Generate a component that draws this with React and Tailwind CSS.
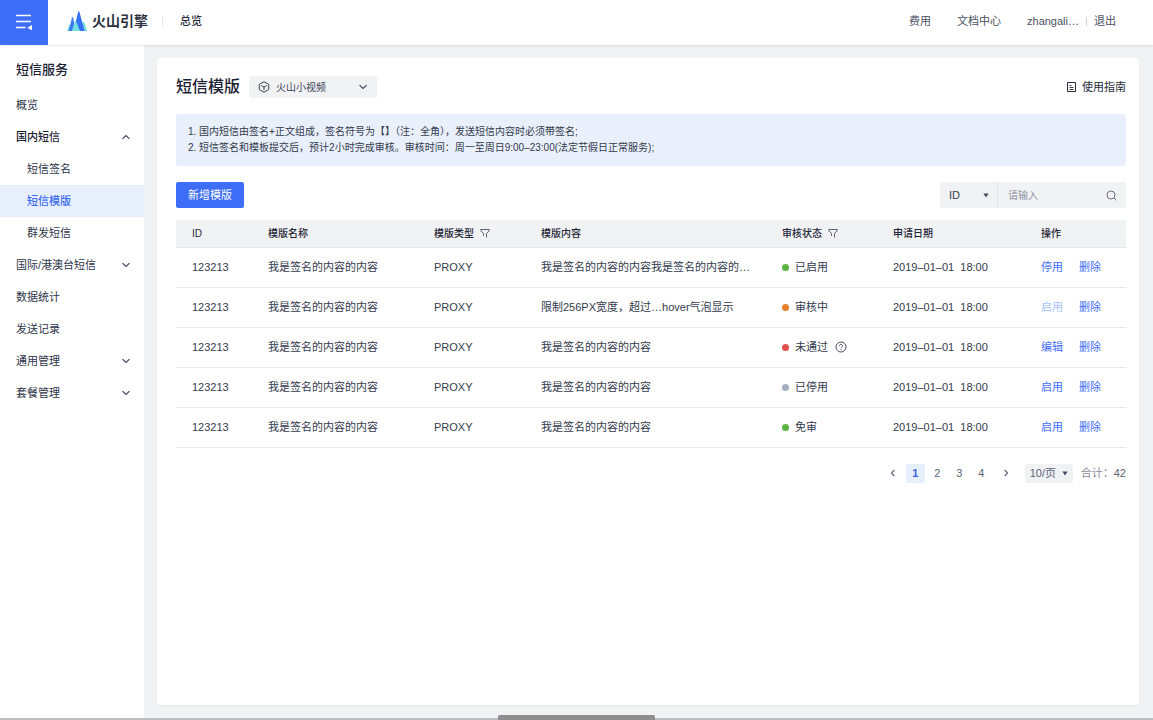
import React from "react";

const Chevron = ({ d, className = "" }) => (
  <svg viewBox="0 0 10 10" className={`h-[10px] w-[10px] shrink-0 ${className}`} fill="none" stroke="currentColor" strokeWidth="1.1" aria-hidden="true">
    <path d={d} />
  </svg>
);
const UP = "M1.5 6.8 5 3.5l3.5 3.3";
const DOWN = "M1.5 3.2 5 6.5l3.5-3.3";
const LEFT = "M6.3 2 3.5 5l2.8 3";
const RIGHT = "M3.7 2 6.5 5 3.7 8";

const Caret = ({ className = "" }) => (
  <svg viewBox="0 0 6 5" className={`pointer-events-none h-[5px] w-[6px] shrink-0 text-[#41485c] ${className}`} aria-hidden="true">
    <path d="M.4.4h5.2L3 4.6z" fill="currentColor" />
  </svg>
);

const Funnel = () => (
  <svg viewBox="0 0 10 10" className="h-[10px] w-[10px]" fill="none" stroke="#4a5169" strokeWidth=".9" strokeLinejoin="round" aria-hidden="true">
    <path d="M3.5 7.8V5.3L.7 2.8V1.5h8.6v1.3L6.5 5.3v4.2" />
  </svg>
);

const Logo = () => (
  <svg viewBox="0 0 20 20" className="h-5 w-5" aria-hidden="true">
    <path d="M0 20 2.6 13.5h2L6 20z" fill="#6fdcdc" />
    <path d="M1.8 20 5 6.5q.5-1 1 0L9 20z" fill="#3b78f0" />
    <path d="M13 20l3-9q.6-.8 1.2 0L20 20z" fill="#6fdcdc" />
    <path d="M6.5 20 11.2.8q.6-1.2 1.2 0L17.6 20z" fill="#3370f5" />
    <path d="M4.8 20 8 10.5q.6-1 1.2 0L13 20z" fill="#74e0dd" />
  </svg>
);

const menu = [
  { label: "概览" },
  { label: "国内短信", arrow: UP, strong: true },
  { label: "短信签名", child: true },
  { label: "短信模版", child: true, active: true },
  { label: "群发短信", child: true },
  { label: "国际/港澳台短信", arrow: DOWN },
  { label: "数据统计" },
  { label: "发送记录" },
  { label: "通用管理", arrow: DOWN },
  { label: "套餐管理", arrow: DOWN },
];

const rows = [
  { text: "我是签名的内容的内容我是签名的内容的…", dot: "bg-[#5bb444]", status: "已启用", action: "停用" },
  { text: "限制256PX宽度，超过…hover气泡显示", dot: "bg-[#e8812f]", status: "审核中", action: "启用", disabled: true },
  { text: "我是签名的内容的内容", dot: "bg-[#e0504b]", status: "未通过", action: "编辑", help: true },
  { text: "我是签名的内容的内容", dot: "bg-[#a5adc2]", status: "已停用", action: "启用" },
  { text: "我是签名的内容的内容", dot: "bg-[#5bb444]", status: "免审", action: "启用" },
];

function Header() {
  return (
    <header className="relative z-10 flex h-[45px] bg-white text-[11px] text-[#4a5063] shadow-[0_1px_2px_rgba(0,0,0,0.1)]">
      <button type="button" aria-label="菜单" className="flex w-12 shrink-0 items-center justify-center bg-[#3e6ef7] pb-[2px]">
        <svg viewBox="0 0 18 16" className="h-4 w-[18px]" aria-hidden="true">
          <path d="M1 1.5h15M1 7.5h15M1 13.5h9.5" stroke="#fff" strokeWidth="1.4" />
          <path d="M17 11v5.5l-4.6-2.7z" fill="#fff" />
        </svg>
      </button>
      <div className="flex grow items-center pb-[3px] pl-[19px]">
        <a href="#home" className="flex items-center gap-[5px] text-[14px] leading-5 font-bold text-[#2c3140]">
          <Logo />
          火山引擎
        </a>
        <span className="ml-[14px] h-[10px] w-px bg-[#e3e5ea]" />
        <a href="#overview" className="ml-[17px] font-medium text-[#252b3a]">总览</a>
        <nav className="ml-auto flex items-center gap-[26px] pr-[37px]">
          <a href="#cost">费用</a>
          <a href="#docs">文档中心</a>
          <div className="flex items-center gap-[7px]">
            <a href="#user">zhangali…</a>
            <span className="h-[9px] w-px bg-[#cfd2d9]" />
            <a href="#logout">退出</a>
          </div>
        </nav>
      </div>
    </header>
  );
}

function Sidebar() {
  return (
    <aside className="w-36 shrink-0 bg-white text-[11px]">
      <h2 className="flex h-11 items-center px-4 pt-[6px] text-[13px] font-medium text-[#1c2233]">短信服务</h2>
      <ul>
        {menu.map((m) => (
          <li key={m.label}>
            <a
              href="#menu"
              className={`flex h-8 items-center justify-between pr-[13px] ${m.child ? "pl-[27px]" : "pl-4"} ${
                m.active ? "bg-[#e8effc] font-medium text-[#3a6bf5]" : m.strong ? "font-medium text-[#1c2233]" : "text-[#2d3448]"
              }`}
            >
              {m.label}
              {m.arrow && <Chevron d={m.arrow} className="text-[#3c4358]" />}
            </a>
          </li>
        ))}
      </ul>
    </aside>
  );
}

function Templates() {
  const th = "pl-4 text-left font-medium";
  const td = "pl-4";
  return (
    <table className="mt-3 w-full table-fixed border-collapse text-[11px] text-[#333a4d]">
      <colgroup>
        <col className="w-[76px]" />
        <col className="w-[166px]" />
        <col className="w-[107px]" />
        <col />
        <col className="w-[111px]" />
        <col className="w-[148px]" />
        <col className="w-[101px]" />
      </colgroup>
      <thead>
        <tr className="h-[27px] border-b border-[#e4e6ea] bg-[#f1f2f4] text-[10px] text-[#1f2536]">
          <th className={th}>ID</th>
          <th className={th}>模版名称</th>
          <th className={th}>
            <div className="flex items-center gap-[6px]">模版类型<button type="button" aria-label="筛选模版类型"><Funnel /></button></div>
          </th>
          <th className={th}>模版内容</th>
          <th className={th}>
            <div className="flex items-center gap-[6px]">审核状态<button type="button" aria-label="筛选审核状态"><Funnel /></button></div>
          </th>
          <th className={th}>申请日期</th>
          <th className={th}>操作</th>
        </tr>
      </thead>
      <tbody>
        {rows.map((r, i) => (
          <tr key={i} className="h-10 border-b border-[#e6e8ec]">
            <td className={td}>123213</td>
            <td className={td}>我是签名的内容的内容</td>
            <td className={td}>PROXY</td>
            <td className="pr-3 pl-4">{r.text}</td>
            <td className={td}>
              <div className="flex items-center whitespace-nowrap">
                <span className={`mr-[6px] h-[7px] w-[7px] rounded-full ${r.dot}`} />
                {r.status}
                {r.help && (
                  <button type="button" aria-label="未通过原因" className="ml-[7px]">
                    <svg viewBox="0 0 12 12" className="h-3 w-3" fill="none" stroke="#4a5169" strokeWidth="1" aria-hidden="true">
                      <circle cx="6" cy="6" r="5" />
                      <path d="M4.5 4.9a1.5 1.5 0 1 1 2.2 1.3c-.5.3-.7.5-.7 1M6 8v1" />
                    </svg>
                  </button>
                )}
              </div>
            </td>
            <td className={td}>2019–01–01&nbsp; 18:00</td>
            <td className={td}>
              <div className="flex gap-4 text-[#3f6ef6]">
                <button type="button" disabled={r.disabled} className="disabled:text-[#a9c4fa]">{r.action}</button>
                <button type="button">删除</button>
              </div>
            </td>
          </tr>
        ))}
      </tbody>
    </table>
  );
}

function Pagination() {
  const box = "flex h-[19px] w-[19px] items-center justify-center rounded-[2px]";
  return (
    <div className="mt-4 flex items-center justify-end text-[11px] text-[#5a6175]">
      <nav aria-label="分页" className="flex gap-[3px]">
        <button type="button" aria-label="上一页" className={box}><Chevron d={LEFT} /></button>
        {[1, 2, 3, 4].map((n) => (
          <button key={n} type="button" className={`${box} ${n === 1 ? "bg-[#e8effc] font-bold text-[#3a62e0]" : ""}`}>{n}</button>
        ))}
        <button type="button" aria-label="下一页" className={`${box} ml-[3px]`}><Chevron d={RIGHT} /></button>
      </nav>
      <div className="relative ml-[9px] flex items-center">
        <select aria-label="每页条数" className="h-[19px] w-12 appearance-none rounded-[2px] bg-[#f1f2f4] pl-[5px]">
          <option>10/页</option>
        </select>
        <Caret className="absolute right-[5px]" />
      </div>
      <span className="ml-2 text-[#868b99]">合计：<span className="text-[#5a6175]">42</span></span>
    </div>
  );
}

export default function App() {
  return (
    <div className="flex min-h-screen flex-col bg-[#f1f2f4] font-['Liberation_Sans','Noto_Sans_CJK_SC',sans-serif]">
      <Header />
      <div className="flex grow">
        <Sidebar />
        <main className="flex min-w-0 grow pt-[13px] pr-[14px] pb-[15px] pl-[13px]">
          <section className="min-w-0 grow rounded-[3px] bg-white pt-[18px] pr-[13px] pl-[19px] shadow-[0_1px_2px_rgba(0,0,0,0.05)]">
            <div className="flex h-[22px] items-center">
              <h1 className="text-[16px] font-medium text-[#1c2233]">短信模版</h1>
              <div className="relative ml-[9px] flex items-center text-[#3c4358]">
                <svg viewBox="0 0 12 12" className="pointer-events-none absolute left-[9px] h-3 w-3" fill="none" stroke="currentColor" strokeWidth="1" strokeLinejoin="round" aria-hidden="true">
                  <path d="M6 .8l4.7 2.6v5.2L6 11.2 1.3 8.6V3.4zM3.3 4.5 6 6l2.7-1.5M6 6v3" />
                </svg>
                <select aria-label="应用" className="h-[22px] w-32 appearance-none rounded-[2px] bg-[#f1f2f4] pl-[27px] text-[10px]">
                  <option>火山小视频</option>
                </select>
                <Chevron d={DOWN} className="pointer-events-none absolute right-[9px]" />
              </div>
              <a href="#guide" className="ml-auto flex items-center gap-1 text-[11px] text-[#252b3a]">
                <svg viewBox="0 0 12 12" className="h-3 w-3" fill="none" stroke="currentColor" strokeWidth="1" aria-hidden="true">
                  <path d="M1.5 1.5h8v9h-8z" />
                  <path d="M3.5 4.5h2M3.5 6.5h4M3.5 8.5h4" strokeWidth=".9" />
                </svg>
                使用指南
              </a>
            </div>
            <div className="mt-4 rounded-[2px] bg-[#e9f0fc] px-3 py-[10px] text-[10px] leading-4 text-[#333a4d]">
              <p>1. 国内短信由签名+正文组成，签名符号为【】（注：全角），发送短信内容时必须带签名;</p>
              <p>2. 短信签名和模板提交后，预计2小时完成审核。审核时间：周一至周日9:00–23:00(法定节假日正常服务);</p>
            </div>
            <div className="mt-4 flex h-[26px] items-stretch justify-between">
              <button type="button" className="rounded-[2px] bg-[#3e6ef7] px-3 text-[11px] text-white">新增模版</button>
              <div className="flex items-stretch rounded-[2px] bg-[#f1f2f4] text-[11px]">
                <div className="relative flex items-center border-r border-[#e2e4e9]">
                  <select aria-label="搜索字段" className="h-full w-[57px] appearance-none pl-[9px] text-[#333a4d]">
                    <option>ID</option>
                  </select>
                  <Caret className="absolute right-[8px]" />
                </div>
                <label className="flex items-center pr-[9px] pl-[10px]">
                  <input aria-label="搜索" placeholder="请输入" className="w-[98px] bg-transparent text-[10px] outline-none placeholder:text-[#8b92a3]" />
                  <svg viewBox="0 0 11 11" className="h-[11px] w-[11px]" fill="none" stroke="#6a7184" strokeWidth="1" aria-hidden="true">
                    <circle cx="5" cy="5" r="4" />
                    <path d="m8 8 2.3 2.3" />
                  </svg>
                </label>
              </div>
            </div>
            <Templates />
            <Pagination />
          </section>
        </main>
      </div>
      <div className="pointer-events-none fixed inset-x-0 bottom-0 z-20 flex h-[5px] items-end justify-center">
        <div className="h-[2px] grow bg-[#bcbdbf]" />
        <div className="h-[5px] w-[157px] rounded-t-[2px] bg-[#8f8d8e]" />
        <div className="h-[2px] grow bg-[#bcbdbf]" />
      </div>
    </div>
  );
}
